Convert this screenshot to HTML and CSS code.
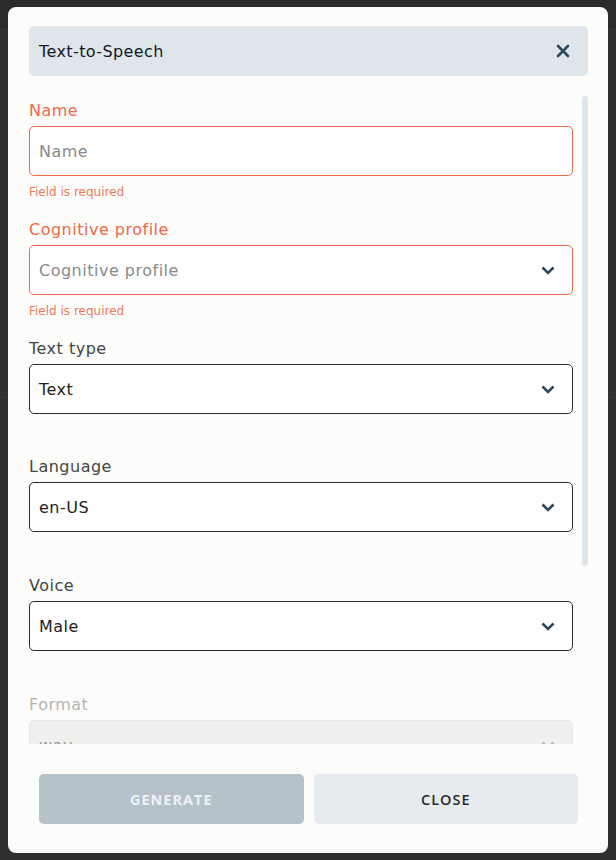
FILE: index.html
```html
<!DOCTYPE html>
<html lang="en">
<head>
<meta charset="utf-8">
<title>Text-to-Speech</title>
<link rel="stylesheet" href="styles.css">
</head>
<body>
<div class="backdrop">
  <div class="modal">
    <div class="modal-header">
      <span class="modal-title">Text-to-Speech</span>
      <button class="icon-btn" aria-label="Close">
        <svg width="14" height="14" viewBox="0 0 14 14"><path d="M2 2L12 12M12 2L2 12" stroke="#2c4a5e" stroke-width="2.6" stroke-linecap="round" fill="none"/></svg>
      </button>
    </div>

    <div class="modal-body">
      <div class="form-scroll">
        <div class="field field-error">
          <label class="field-label">Name</label>
          <div class="control"><span class="placeholder">Name</span></div>
          <div class="helper">Field is required</div>
        </div>

        <div class="field field-error">
          <label class="field-label">Cognitive profile</label>
          <div class="control">
            <span class="placeholder">Cognitive profile</span>
            <svg class="chevron" width="14" height="9" viewBox="0 0 14 9"><path d="M1.5 1.5L7 7L12.5 1.5" stroke="#2c4a5e" stroke-width="2.6" fill="none"/></svg>
          </div>
          <div class="helper">Field is required</div>
        </div>

        <div class="field">
          <label class="field-label">Text type</label>
          <div class="control">
            <span class="value">Text</span>
            <svg class="chevron" width="14" height="9" viewBox="0 0 14 9"><path d="M1.5 1.5L7 7L12.5 1.5" stroke="#2c4a5e" stroke-width="2.6" fill="none"/></svg>
          </div>
          <div class="helper helper-short"></div>
        </div>

        <div class="field">
          <label class="field-label">Language</label>
          <div class="control">
            <span class="value">en-US</span>
            <svg class="chevron" width="14" height="9" viewBox="0 0 14 9"><path d="M1.5 1.5L7 7L12.5 1.5" stroke="#2c4a5e" stroke-width="2.6" fill="none"/></svg>
          </div>
          <div class="helper"></div>
        </div>

        <div class="field">
          <label class="field-label">Voice</label>
          <div class="control">
            <span class="value">Male</span>
            <svg class="chevron" width="14" height="9" viewBox="0 0 14 9"><path d="M1.5 1.5L7 7L12.5 1.5" stroke="#2c4a5e" stroke-width="2.6" fill="none"/></svg>
          </div>
          <div class="helper"></div>
        </div>

        <div class="field field-disabled">
          <label class="field-label">Format</label>
          <div class="control">
            <span class="value">wav</span>
            <svg class="chevron" width="14" height="9" viewBox="0 0 14 9"><path d="M1.5 1.5L7 7L12.5 1.5" stroke="#b9bcbe" stroke-width="2.6" fill="none"/></svg>
          </div>
          <div class="helper"></div>
        </div>
      </div>

      <div class="scroll-rail"><div class="scroll-thumb"></div></div>
    </div>

    <div class="modal-footer">
      <button class="btn btn-primary" disabled>GENERATE</button>
      <button class="btn btn-secondary">CLOSE</button>
    </div>
  </div>
</div>
</body>
</html>
```
FILE: styles.css
```css
* {
  box-sizing: border-box;
}

html, body {
  margin: 0;
  padding: 0;
}

body {
  width: 616px;
  height: 860px;
  overflow: hidden;
  font-family: "DejaVu Sans", "Noto Sans", sans-serif;
  background: #2f2f2f;
}

/* dimmed page behind the dialog */
.backdrop {
  height: 860px;
  padding: 7px 8px;
  background:
    linear-gradient(#2a2a2a 0 28px, transparent 28px),
    linear-gradient(to bottom, transparent 397px, #363636 397px, #363636 398px, transparent 398px),
    #303030;
}

.modal {
  width: 600px;
  height: 846px;
  background: #fcfcfa;
  border-radius: 8px;
  padding: 19px 20px 29px 21px;
  display: flex;
  flex-direction: column;
}

.modal-header {
  height: 50px;
  flex: none;
  background: #dfe6eb;
  border-radius: 5px;
  display: flex;
  align-items: center;
  justify-content: space-between;
  padding: 0 18px 0 10px;
}

.modal-title {
  font-size: 16px;
  letter-spacing: 0.4px;
  color: #101828;
}

.icon-btn {
  border: 0;
  background: none;
  padding: 0;
  width: 14px;
  height: 14px;
  display: flex;
}

.modal-body {
  margin-top: 20px;
  height: 648px;
  flex: none;
  display: flex;
  gap: 9px;
}

.form-scroll {
  flex: 1;
  overflow: hidden;
  padding-top: 2px;
}

.scroll-rail {
  width: 6px;
  flex: none;
}

.scroll-thumb {
  height: 470px;
  background: #dfe6eb;
  border-radius: 3px;
}

.field {
  display: flex;
  flex-direction: column;
}

.field-label {
  font-size: 16px;
  letter-spacing: 0.5px;
  line-height: 24px;
  padding-top: 1px;
  height: 24px;
  color: #454545;
  margin-bottom: 4px;
}

.control {
  height: 50px;
  flex: none;
  border: 1px solid #2b2b2b;
  border-radius: 5px;
  background: #ffffff;
  display: flex;
  align-items: center;
  justify-content: space-between;
  padding: 0 17px 0 9px;
  font-size: 16px;
  letter-spacing: 0.5px;
}

.value {
  color: #222222;
}

.placeholder {
  color: #8a8a8a;
}

.helper {
  height: 41px;
  flex: none;
  padding-top: 8px;
  font-size: 12px;
  line-height: 16px;
}

.helper-short {
  height: 40px;
}

.field-error .field-label {
  color: #f0694a;
}

.field-error .control {
  border-color: #ec6a4c;
}

.field-error .helper {
  color: #f07a5c;
}

.field-disabled .field-label {
  color: #b4b4b4;
}

.field-disabled .control {
  background: #efefee;
  border-color: #e6e6e4;
}

.field-disabled .value {
  color: #9a9a9a;
}

.modal-footer {
  flex: none;
  display: grid;
  grid-template-columns: 1fr 1fr;
  gap: 10px;
  padding: 30px 10px 0;
}

.btn {
  height: 50px;
  border: 0;
  border-radius: 5px;
  font-family: "Open Sans", sans-serif;
  font-size: 14.5px;
  letter-spacing: 1px;
}

.btn-primary {
  background: #b5c2ca;
  color: #eef2f4;
  font-weight: 700;
}

.btn-secondary {
  background: #e6ebef;
  color: #2a2a2a;
  font-weight: 600;
}
```
